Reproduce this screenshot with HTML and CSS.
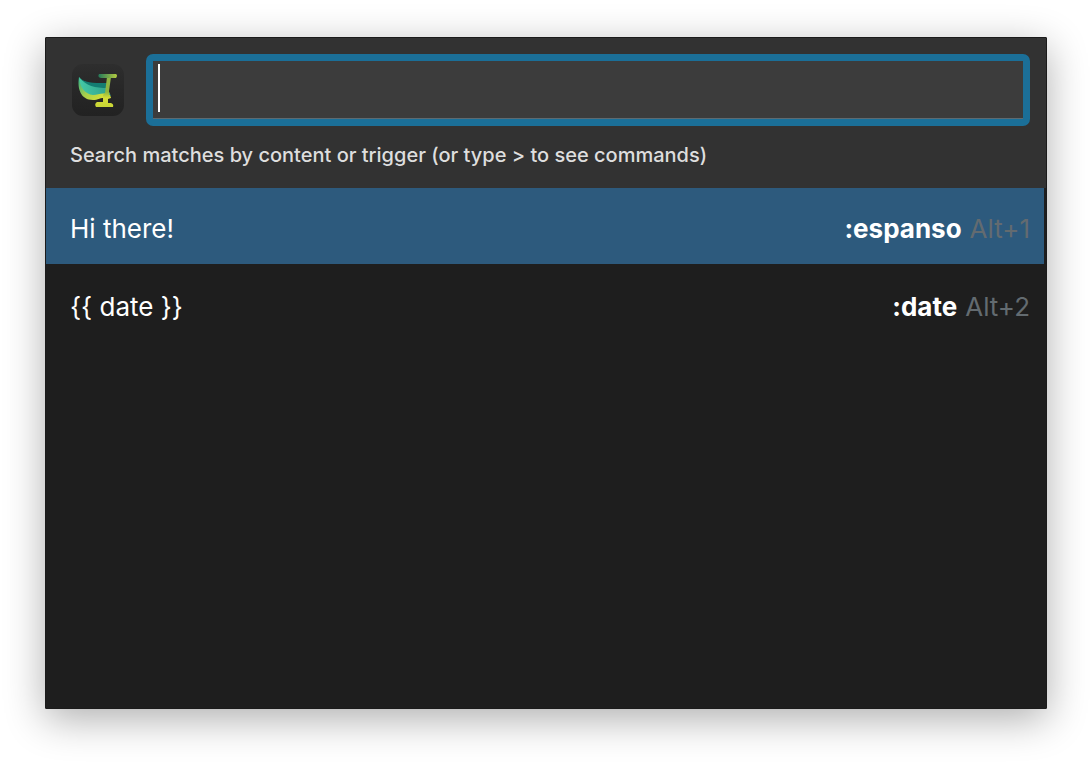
FILE: index.html
```html
<!DOCTYPE html>
<html lang="en">
<head>
  <meta charset="UTF-8">
  <meta name="viewport" content="width=device-width, initial-scale=1.0">
  <title>espanso</title>
  <link rel="stylesheet" href="styles.css">
</head>
<body>

  <main class="window">
    <header class="top">
      <div class="search-row">
        <svg class="logo" viewBox="0 0 52 52" aria-hidden="true">
          <defs>
            <linearGradient id="tile" x1="0" y1="0" x2="0" y2="1">
              <stop offset="0" stop-color="#2e2e2e"/>
              <stop offset="0.5" stop-color="#272727"/>
              <stop offset="1" stop-color="#222"/>
            </linearGradient>
            <linearGradient id="stand" x1="0" y1="0" x2="0" y2="1">
              <stop offset="0" stop-color="#8fb545"/>
              <stop offset="0.5" stop-color="#8fb53f"/>
              <stop offset="0.7" stop-color="#d5dc38"/>
              <stop offset="1" stop-color="#c9d636"/>
            </linearGradient>
            <linearGradient id="rim" x1="0" y1="0" x2="1" y2="0.6">
              <stop offset="0" stop-color="#2fae86"/>
              <stop offset="0.5" stop-color="#a9cf4a"/>
              <stop offset="1" stop-color="#d8e036"/>
            </linearGradient>
            <linearGradient id="bar" x1="0" y1="0" x2="1" y2="0">
              <stop offset="0" stop-color="#24795a"/>
              <stop offset="1" stop-color="#b4cb40"/>
            </linearGradient>
            <linearGradient id="wing" x1="0" y1="0" x2="1" y2="0">
              <stop offset="0" stop-color="#45c9a6"/>
              <stop offset="1" stop-color="#2f9f8a"/>
            </linearGradient>
          </defs>
          <rect width="52" height="52" rx="11" fill="url(#tile)"/>
          <path d="M7 13 C5 25 9 36 21 36 C27 36 30 32 39 34 L37 28 L12 24 Z" fill="url(#rim)"/>
          <path d="M7 13 C12 19 18 20 33 20 L39 32 C31 27 27 31 21 31 C13 30 8 24 7 13 Z" fill="url(#wing)"/>
          <path d="M7 13 C12 19 20 19 35 19 L36 24 C23 24 14 22 7 13 Z" fill="#137d72"/>
          <path d="M35 13 H39 L37 27 C37 31 38 33 39 34 L36 35 V39 H39 Q42 40 41 43 H24 Q22 40 25 38 L31 38 V31 L33 29 Z" fill="url(#stand)"/>
          <path d="M27 10 H44 Q46 11 44 14 H29 Q25 13 27 10 Z" fill="url(#bar)"/>
        </svg>
        <div class="field">
          <input class="search" type="text" aria-label="Search" aria-describedby="hint">
          <span class="caret"></span>
        </div>
      </div>
      <p class="hint" id="hint">Search matches by content or trigger (or type &gt; to see commands)</p>
    </header>

    <ul class="results">
      <li class="result selected">
        <span class="content">Hi there!</span>
        <span class="trigger">:espanso</span>
        <span class="shortcut">Alt+1</span>
      </li>
      <li class="result">
        <span class="content">{{ date }}</span>
        <span class="trigger">:date</span>
        <span class="shortcut">Alt+2</span>
      </li>
    </ul>
  </main>

</body>
</html>
```
FILE: styles.css
```css
* {
  box-sizing: border-box;
}
body {
  margin: 0;
  min-height: 100vh;
  padding: 37px 45px 53px;
  display: flex;
  background: #fff;
  font-family: Inter, "Liberation Sans", sans-serif;
  color: #fff;
}
.window {
  flex: 1;
  display: flex;
  flex-direction: column;
  background: #1e1e1e;
  border: 1px solid #1b1b1b;
  border-radius: 1px;
  box-shadow: 0 10px 40px rgba(0, 0, 0, 0.32);
}
.top {
  padding: 16px 16px 20px 24px;
  background: #323232;
}
.search-row {
  display: flex;
  align-items: center;
  gap: 22px;
  padding-left: 2px;
}
.logo {
  width: 52px;
  height: 52px;
}
.field {
  position: relative;
  flex: 1;
}
.search {
  display: block;
  width: 100%;
  height: 72px;
  padding: 0 8px;
  border: 7px solid #1b6f98;
  border-radius: 7px;
  outline: none;
  background: #3c3c3c;
  box-shadow: inset 0 -1px #5d6b72;
  color: #fff;
  font: inherit;
  font-size: 40px;
  caret-color: transparent;
}
.caret {
  position: absolute;
  top: 10px;
  left: 12px;
  width: 2px;
  height: 48px;
  background: #fff;
}
.hint {
  margin: 16px 0 0;
  font-size: 20px;
  font-weight: 500;
  line-height: 26px;
  color: #dedede;
}
.results {
  margin: 0;
  padding: 0 2px 0 0;
  list-style: none;
}
.result {
  display: flex;
  align-items: center;
  height: 76px;
  padding: 6px 14px 0 24px;
  font-size: 26px;
  line-height: 32px;
}
.result + .result {
  margin-top: 2px;
}
.selected {
  background: #2d5a7d;
}
.content {
  flex: 1;
}
.trigger {
  font-weight: 700;
}
.shortcut {
  margin-left: 8px;
  color: #636b70;
}
```
